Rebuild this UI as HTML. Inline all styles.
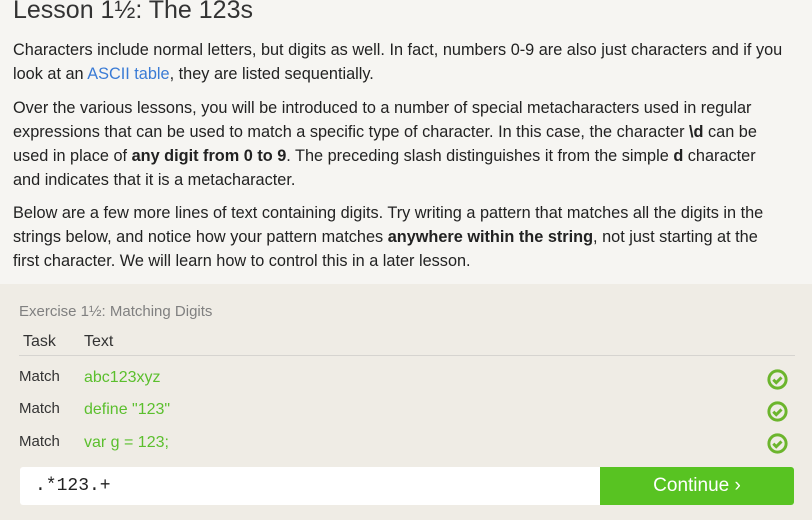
<!DOCTYPE html>
<html><head><meta charset="utf-8"><style>
body{margin:0;width:812px;height:520px;overflow:hidden;background:#f6f5f2;font-family:"Liberation Sans","DejaVu Sans",sans-serif;color:#222;}
h1{position:absolute;left:13px;top:-4px;margin:0;font-size:25px;font-weight:normal;color:#333;}
.p{position:absolute;left:13px;width:800px;white-space:nowrap;font-size:16.3px;line-height:24px;margin:0;}
a{color:#3a7bd5;text-decoration:none}
.panel{position:absolute;left:0;top:284px;width:812px;height:236px;background:#efece5;}
.t{position:absolute;font-size:15px;}
.m{position:absolute;left:19px;font-size:15px;color:#333}
.g{position:absolute;left:84px;font-size:16px;color:#5bbf2d}
.ck{position:absolute;left:767px;width:21px;height:21px}
</style></head><body>
<h1>Lesson 1½: The 123s</h1>
<p class="p" style="top:38px">Characters include normal letters, but digits as well. In fact, numbers 0-9 are also just characters and if you<br>look at an <a>ASCII table</a>, they are listed sequentially.</p>
<p class="p" style="top:96px">Over the various lessons, you will be introduced to a number of special metacharacters used in regular<br>expressions that can be used to match a specific type of character. In this case, the character <b>\d</b> can be<br>used in place of <b>any digit from 0 to 9</b>. The preceding slash distinguishes it from the simple <b>d</b> character<br>and indicates that it is a metacharacter.</p>
<p class="p" style="top:201px">Below are a few more lines of text containing digits. Try writing a pattern that matches all the digits in the<br>strings below, and notice how your pattern matches <b>anywhere within the string</b>, not just starting at the<br>first character. We will learn how to control this in a later lesson.</p>
<div class="panel"></div>
<div class="t" style="left:19px;top:303px;color:#808080">Exercise 1½: Matching Digits</div>
<div class="t" style="left:23px;top:333px;font-size:16px;color:#333">Task</div>
<div class="t" style="left:84px;top:333px;font-size:16px;color:#333">Text</div>
<div style="position:absolute;left:19px;top:355px;width:776px;height:1px;background:#d6d4d0"></div>
<div class="m" style="top:368px">Match</div><div class="g" style="top:369px">abc123xyz</div>
<div class="m" style="top:400px">Match</div><div class="g" style="top:401px">define "123"</div>
<div class="m" style="top:433px">Match</div><div class="g" style="top:434px">var g = 123;</div>
<svg class="ck" style="top:369px" viewBox="0 0 20 20"><circle cx="10" cy="10" r="8.2" fill="none" stroke="#6cb52d" stroke-width="2.8"/><path d="M6 10.2l2.8 2.8 5-5" fill="none" stroke="#6cb52d" stroke-width="2.8"/></svg>
<svg class="ck" style="top:401px" viewBox="0 0 20 20"><circle cx="10" cy="10" r="8.2" fill="none" stroke="#6cb52d" stroke-width="2.8"/><path d="M6 10.2l2.8 2.8 5-5" fill="none" stroke="#6cb52d" stroke-width="2.8"/></svg>
<svg class="ck" style="top:433px" viewBox="0 0 20 20"><circle cx="10" cy="10" r="8.2" fill="none" stroke="#6cb52d" stroke-width="2.8"/><path d="M6 10.2l2.8 2.8 5-5" fill="none" stroke="#6cb52d" stroke-width="2.8"/></svg>
<div style="position:absolute;left:20px;top:467px;width:582px;height:38px;background:#fff;border-radius:3px 0 0 3px"></div>
<div style="position:absolute;left:35px;top:476px;font-family:'Liberation Mono',monospace;font-size:18px;color:#222">.*123.+</div>
<div style="position:absolute;left:600px;top:467px;width:194px;height:38px;background:#58c322;border-radius:0 3px 3px 0;color:#fff;font-size:19px;line-height:38px;text-align:center">Continue ›</div>
</body></html>
